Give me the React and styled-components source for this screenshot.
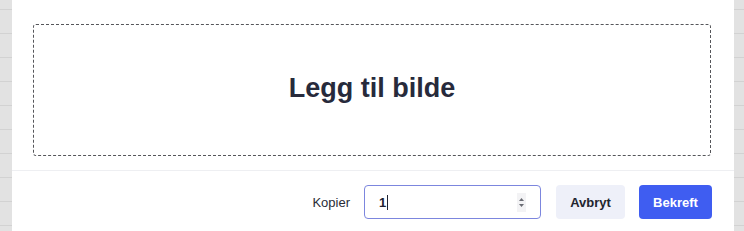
import React from "react";
import styled, { createGlobalStyle } from "styled-components";

const Global = createGlobalStyle`
  html, body { margin: 0; padding: 0; background: #ffffff; }
  body { font-family: "Liberation Sans", Arial, Helvetica, sans-serif; }
  #root { height: 231px; overflow: hidden; }
`;

const Page = styled.div`
  display: flex;
  height: 231px;
  width: 744px;
`;

const Backdrop = styled.div`
  width: ${(p) => p.$w}px;
  flex: none;
  background-color: #e2e2e2;
  background-image: repeating-linear-gradient(
    to bottom,
    transparent 0px,
    transparent 9px,
    #d2d2d2 9px,
    #d2d2d2 10px,
    transparent 10px,
    transparent 24px
  );
`;

const Modal = styled.div`
  flex: 1;
  display: flex;
  flex-direction: column;
  background: #ffffff;
`;

const Body = styled.div`
  padding: 24px 23px 14px 21px;
`;

const DropZone = styled.div`
  height: 130px;
  border: 1px dashed #55565a;
  border-radius: 3px;
  display: flex;
  align-items: center;
  justify-content: center;
`;

const DropLabel = styled.span`
  font-size: 27px;
  font-weight: 700;
  color: #272a3b;
  margin-top: -3px;
`;

const Footer = styled.div`
  border-top: 1px solid #eeeff2;
  display: flex;
  align-items: center;
  justify-content: flex-end;
  padding: 14px 22px 0 0;
`;

const Label = styled.span`
  font-size: 13px;
  color: #2a2c36;
  margin-right: 14px;
`;

const Field = styled.div`
  box-sizing: border-box;
  width: 177px;
  height: 34px;
  border: 1px solid #7c86de;
  border-radius: 4px;
  display: flex;
  align-items: center;
  padding: 0 14px 0 14px;
  margin-right: 15px;
`;

const Value = styled.span`
  font-size: 13px;
  font-weight: 700;
  color: #1f2230;
`;

const Caret = styled.span`
  display: inline-block;
  width: 1px;
  height: 15px;
  background: #1f2230;
  margin-left: 1px;
`;

const Spinner = styled.div`
  margin-left: auto;
  width: 9px;
  height: 19px;
  background: #f3f3f5;
  display: flex;
  align-items: center;
  justify-content: center;
`;

const Buttons = styled.div`
  display: flex;
  gap: 14px;
`;

const Button = styled.button`
  box-sizing: border-box;
  height: 34px;
  padding: 0;
  border: none;
  border-radius: 4px;
  font-family: inherit;
  font-size: 13px;
  font-weight: 700;
  cursor: pointer;
  background: ${(p) => (p.$primary ? "#3f5df1" : "#eef0f9")};
  color: ${(p) => (p.$primary ? "#ffffff" : "#22252f")};
  width: ${(p) => p.$w}px;
`;

export default function App() {
  return (
    <>
      <Global />
      <Page>
        <Backdrop $w={12} />
        <Modal>
          <Body>
            <DropZone>
              <DropLabel>Legg til bilde</DropLabel>
            </DropZone>
          </Body>
          <Footer>
            <Label>Kopier</Label>
            <Field>
              <Value>1</Value>
              <Caret />
              <Spinner>
                <svg width="7" height="13" viewBox="0 0 7 13">
                  <path d="M3.5 2 L6 5 L1 5 Z" fill="#6a6c74" />
                  <path d="M3.5 11 L6 8 L1 8 Z" fill="#6a6c74" />
                </svg>
              </Spinner>
            </Field>
            <Buttons>
              <Button $w={69}>Avbryt</Button>
              <Button $primary $w={73}>Bekreft</Button>
            </Buttons>
          </Footer>
        </Modal>
        <Backdrop $w={10} />
      </Page>
    </>
  );
}
